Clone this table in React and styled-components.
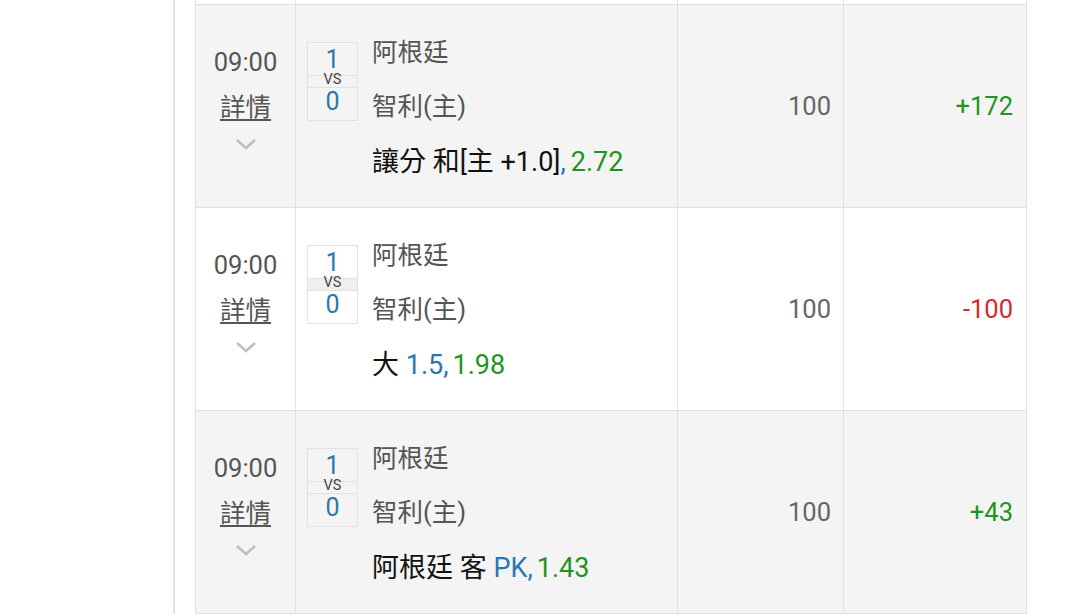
import React from "react";
import styled, { createGlobalStyle } from "styled-components";

const Global = createGlobalStyle`
  html, body { margin: 0; padding: 0; background: #fff; }
  body { font-family: Roboto, "Noto Sans CJK TC", sans-serif; overflow: hidden; }
`;

const Viewport = styled.div`
  height: 614px;
  overflow: hidden;
`;

const Panel = styled.div`
  margin-left: 173px;
  width: 871px;
  padding: 0 19px 0 20px;
  border-left: 2px solid #e4e4e4;
  border-right: 2px solid #e4e4e4;
  min-height: 614px;
  box-sizing: content-box;
`;

const Table = styled.div`
  width: 832px;
  margin-top: -198px;
  border-left: 1px solid #e0e0e0;
  box-sizing: border-box;
`;

const Row = styled.div`
  display: grid;
  grid-template-columns: 100px 382px 166px 183px;
  height: 203px;
  box-sizing: border-box;
  border-bottom: 1px solid #e0e0e0;
  background: ${(p) => (p.$shaded ? "#f4f4f4" : "#ffffff")};
`;

const Cell = styled.div`
  border-right: 1px solid #e0e0e0;
  display: flex;
`;

const TimeCell = styled(Cell)`
  flex-direction: column;
  align-items: center;
  padding-top: 42px;
`;

const Time = styled.div`
  font-size: 25.5px;
  line-height: 30px;
  color: #555;
`;

const Detail = styled.a`
  margin-top: 15px;
  font-size: 25.5px;
  line-height: 30px;
  color: #555;
  text-decoration: underline;
  text-underline-offset: 3px;
`;

const Chevron = styled.svg`
  margin-top: 16px;
  width: 22px;
  height: 13px;
`;

const MatchCell = styled(Cell)`
  padding: 32px 0 0 11px;
  gap: 14px;
  align-items: flex-start;
`;

const ScoreBox = styled.div`
  margin-top: 5px;
  width: 51px;
  display: flex;
  flex-direction: column;
  border: 1px solid #e2e2e2;
  box-sizing: border-box;
`;

const Score = styled.div`
  height: 32px;
  box-sizing: border-box;
  display: flex;
  justify-content: center;
  align-items: ${(p) => (p.$bottom ? "flex-start" : "flex-end")};
  padding-bottom: ${(p) => (p.$bottom ? 0 : 3)}px;
  font-size: 25px;
  line-height: ${(p) => (p.$bottom ? "27px" : "25px")};
  color: #2a78b0;
`;

const Vs = styled.div`
  height: 11px;
  border-top: 1px solid #e2e2e2;
  border-bottom: 1px solid #e2e2e2;
  background: ${(p) => (p.$shaded ? "#f4f4f4" : "#efefef")};
  display: flex;
  align-items: flex-start;
  justify-content: center;
  font-size: 14.5px;
  line-height: 8px;
  color: #444;
`;

const Names = styled.div`
  display: flex;
  flex-direction: column;
`;

const Team = styled.div`
  font-size: 25.5px;
  line-height: 30px;
  color: #555;
  margin-bottom: ${(p) => p.$gap || 0}px;
`;

const Bet = styled.div`
  font-size: 27px;
  line-height: 30px;
  color: #111;
  white-space: nowrap;
`;

const Blue = styled.span`
  color: #2a78b0;
`;
const Green = styled.span`
  color: #1f9420;
  margin-left: ${(p) => p.$gap || 0}px;
`;

const NumCell = styled(Cell)`
  align-items: center;
  justify-content: flex-end;
  padding-right: ${(p) => p.$pr}px;
  font-size: 25.5px;
  color: ${(p) => p.$color};
`;

const rows = [
  { shaded: true, bet: <><span>讓分 和[主 +1.0]</span><Blue>,</Blue><Green $gap={5}>2.72</Green></>, result: "+172", color: "#1f9420" },
  { shaded: false, bet: <><span>大 </span><Blue>1.5,</Blue><Green $gap={4}>1.98</Green></>, result: "-100", color: "#d42a2a" },
  { shaded: true, bet: <><span>阿根廷 客 </span><Blue>PK,</Blue><Green $gap={4}>1.43</Green></>, result: "+43", color: "#1f9420" },
];

function MatchRow({ r }) {
  return (
    <Row $shaded={r.shaded}>
      <TimeCell>
        <Time>09:00</Time>
        <Detail>詳情</Detail>
        <Chevron viewBox="0 0 22 13">
          <polyline points="2,2 11,10 20,2" fill="none" stroke="#bfbfbf" strokeWidth="2.6" />
        </Chevron>
      </TimeCell>
      <MatchCell>
        <ScoreBox>
          <Score>1</Score>
          <Vs $shaded={r.shaded}>VS</Vs>
          <Score $bottom>0</Score>
        </ScoreBox>
        <Names>
          <Team $gap={24}>阿根廷</Team>
          <Team $gap={26}>智利(主)</Team>
          <Bet>{r.bet}</Bet>
        </Names>
      </MatchCell>
      <NumCell $pr={12} $color="#666">100</NumCell>
      <NumCell $pr={13} $color={r.color}>{r.result}</NumCell>
    </Row>
  );
}

export default function App() {
  return (
    <Viewport>
      <Global />
      <Panel>
        <Table>
          <MatchRow r={{ ...rows[1], shaded: false }} />
          {rows.map((r, i) => (
            <MatchRow key={i} r={r} />
          ))}
        </Table>
      </Panel>
    </Viewport>
  );
}
